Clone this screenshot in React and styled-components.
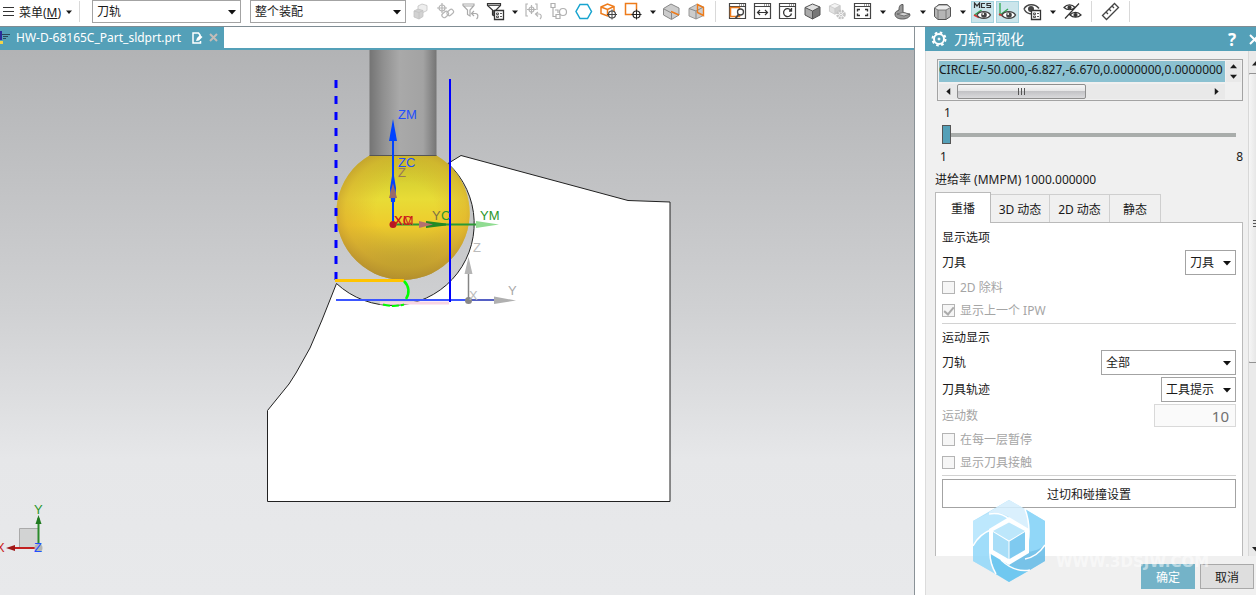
import React, { useState } from 'react';
import styled, { createGlobalStyle } from 'styled-components';

const GlobalStyles = createGlobalStyle`
  :root {
    --teal: #54a0b8;
    --panel: #f0f0f0;
    --border: #a3a3a3;
    --muted: #a5a5a5;
  }
  * {
    box-sizing: border-box;
  }
  html, body, #root {
    height: 100%;
    margin: 0;
  }
  body, button, input, select {
    font-family: "Noto Sans", "Noto Sans CJK SC", sans-serif;
    font-size: 12px;
    color: #1a1a1a;
  }
  body {
    line-height: 18px;
    overflow: hidden;
  }
`;

const AppStyles = styled.div`
  display: flex;
  flex-direction: column;
  height: 100vh;
  background: #fff;
`;

const ToolbarStyles = styled.header`
  display: flex;
  align-items: center;
  flex: none;
  height: 27px;
  padding-bottom: 3px;
  border-bottom: 1px solid #7f8c93;
  white-space: nowrap;
  overflow: hidden;
`;

const MenuButton = styled.button`
  display: flex;
  align-items: center;
  flex: none;
  gap: 5px;
  width: 73px;
  padding: 0 0 0 3px;
  border: 0;
  background: none;
`;

const Separator = styled.i`
  flex: none;
  width: 1px;
  height: 21px;
  margin: 0 ${(p) => (p.$wide ? 12 : 6)}px 0 6px;
  background: #d9d9d9;
`;

const IconGroup = styled.div`
  display: flex;
  align-items: center;
  flex: none;
  padding-left: ${(p) => p.$start || 0}px;
`;

const IconButton = styled.button`
  display: grid;
  place-items: center;
  flex: none;
  width: 23px;
  height: 22px;
  margin: 0 1px;
  padding: 0;
  border: 1px solid ${(p) => (p.$on ? '#a5d3df' : 'transparent')};
  background: ${(p) => (p.$on ? '#cbe5eb' : 'none')};
`;

const CaretButton = styled.button`
  display: grid;
  place-items: center;
  width: ${(p) => (p.$tight ? 13 : 15)}px;
  height: 22px;
  padding: 0;
  border: 0;
  background: none;
`;

const SelectStyles = styled.div`
  position: relative;
  flex: none;
  width: ${(p) => p.$width}px;
  margin-right: ${(p) => p.$gap || 0}px;
  select {
    display: block;
    width: 100%;
    height: ${(p) => p.$height || 25}px;
    padding: 0 16px 0 4px;
    border: 1px solid var(--border);
    border-radius: 0;
    background: #fff;
    appearance: none;
  }
  svg {
    position: absolute;
    top: 50%;
    right: 5px;
    margin-top: -2px;
    pointer-events: none;
  }
`;

const MainStyles = styled.main`
  display: flex;
  flex: 1;
  min-height: 0;
`;

const ViewStyles = styled.section`
  display: flex;
  flex-direction: column;
  flex: 1;
  min-width: 0;
  border-right: 1px solid #8a9297;
`;

const TabBar = styled.div`
  flex: none;
  height: 23px;
  border-bottom: 2px solid var(--teal);
`;

const FileTab = styled.div`
  display: flex;
  align-items: center;
  gap: 6px;
  width: 224px;
  height: 21px;
  background: var(--teal);
  color: #fff;
  white-space: nowrap;
  .name {
    width: 170px;
  }
  button {
    display: grid;
    padding: 0;
    border: 0;
    background: none;
  }
`;

const Viewport = styled.div`
  position: relative;
  flex: 1;
  min-height: 0;
  background: linear-gradient(#b2b3b5, #d0d1d3 48%, #e6e7e9 75%, #e8e9eb);
  .scene {
    display: block;
    width: 100%;
    height: 100%;
  }
  .triad {
    position: absolute;
    left: 0;
    bottom: 35px;
  }
  text {
    font-family: "Liberation Sans", Arial, sans-serif;
    font-size: 13px;
  }
`;

const PanelStyles = styled.aside`
  position: relative;
  display: flex;
  flex-direction: column;
  flex: none;
  width: 331px;
  margin-left: 10px;
  background: var(--panel);
  overflow: hidden;
`;

const PanelHeader = styled.div`
  display: flex;
  align-items: center;
  flex: none;
  height: 24px;
  padding-left: 6px;
  background: var(--teal);
  h2 {
    flex: 1;
    margin: 0 0 0 7px;
    color: #fff;
    font-size: 14px;
    font-weight: 400;
  }
  button {
    display: grid;
    place-items: center;
    width: 34px;
    height: 24px;
    padding: 0;
    border: 0;
    background: none;
    color: #fff;
    font-size: 17px;
    font-weight: 700;
  }
  button:last-child {
    justify-items: start;
    width: 7px;
  }
`;

const PanelBody = styled.div`
  display: flex;
  flex: 1;
  min-height: 0;
  border-left: 1px solid #dcdcdc;
`;

const PanelScroll = styled.div`
  display: flex;
  flex-direction: column;
  flex: 1;
  min-width: 0;
  margin-right: 5px;
  padding: 8px 0 0 9px;
`;

const SideBar = styled.div`
  flex: none;
  width: 8px;
  background: #eaeaea;
  border-left: 1px solid #d8d8d8;
  overflow: hidden;
  display: flex;
  flex-direction: column;
  .thumb {
    width: 14px;
    height: 290px;
    margin: 3px 0 auto -1px;
    padding: 136px 0 0 1px;
    border: 1px solid #929292;
    border-radius: 2px;
    background: linear-gradient(90deg, #f6f6f6, #dcdcdc);
  }
  svg {
    display: block;
    flex: none;
    margin: 10px 0 4px 3px;
  }
`;

const PathList = styled.div`
  display: grid;
  grid-template-columns: 1fr 16px;
  flex: none;
  width: 306px;
  height: 42px;
  margin-left: 2px;
  padding: 1px;
  border: 1px solid var(--border);
  [role='listbox'] {
    height: 21px;
    overflow: hidden;
    background: #8bc1d1;
    line-height: 17px;
    white-space: nowrap;
  }
  button {
    display: grid;
    place-items: center;
    padding: 0;
    border: 0;
    background: none;
  }
`;

const Spinner = styled.div`
  display: grid;
  grid-template-rows: 1fr 1fr;
  width: 15px;
  height: 21px;
  margin-left: 1px;
  background: #e9e9e9;
`;

const HScroll = styled.div`
  display: grid;
  grid-template-columns: 18px 129px 1fr 18px;
  height: 15px;
  margin-top: 1px;
  background: #e9e9e9;
  .thumb {
    display: grid;
    place-items: center;
    border: 1px solid #8e8e8e;
    border-radius: 2px;
    background: linear-gradient(#f5f5f5, #e4e4e5 50%, #c3c3c6 50%, #dadadc);
  }
`;

const SliderStyles = styled.div`
  margin-top: 3px;
  padding: 0 7px;
  label {
    display: block;
    height: 21px;
    padding-left: 2px;
  }
  input {
    display: block;
    width: 100%;
    height: 19px;
    margin: 0;
    background: linear-gradient(#a9adab, #a9adab) center / 100% 4px no-repeat;
    appearance: none;
  }
  input::-webkit-slider-thumb {
    width: 9px;
    height: 19px;
    border: 1px solid #555;
    background: var(--teal);
    appearance: none;
  }
  .range {
    display: flex;
    justify-content: space-between;
    margin: 4px -7px 0 -2px;
  }
`;

const FeedRate = styled.p`
  margin: 5px 0 2px;
`;

const TabsStyles = styled.div`
  display: flex;
  align-items: flex-end;
  height: 31px;
`;

const TabButton = styled.button`
  position: relative;
  flex: none;
  width: ${(p) => p.$width}px;
  height: ${(p) => (p.$active ? 31 : 28)}px;
  margin-bottom: ${(p) => (p.$active ? -1 : 0)}px;
  padding: 0;
  border: 1px solid #cfcfcf;
  border-bottom: 0;
  border-left-width: ${(p) => (p.$active ? 1 : 0)}px;
  border-color: ${(p) => (p.$active ? '#bababa' : '#cfcfcf')};
  background: ${(p) => (p.$active ? '#fff' : 'var(--panel)')};
`;

const TabPanel = styled.div`
  flex: 1;
  padding: 2px 6px 0;
  border: 1px solid #bababa;
  border-bottom: 0;
  background: #fff;
  h3 {
    margin: 0;
    padding-top: 2px;
    font-size: 12px;
    font-weight: 400;
    line-height: 22px;
  }
  hr {
    height: 1px;
    margin: 1px 0;
    border: 0;
    background: #d2d2d2;
  }
`;

const Row = styled.div`
  display: flex;
  align-items: center;
  justify-content: space-between;
  height: ${(p) => (p.$muted ? 25 : 27)}px;
  color: ${(p) => (p.$muted ? 'var(--muted)' : 'inherit')};
`;

const NumberInput = styled.input`
  width: 82px;
  height: 23px;
  padding: 0 6px;
  border: 1px solid #d9d9d9;
  background: #fafafa;
  color: #707070;
  font-size: 15px;
  text-align: right;
`;

const CheckLabel = styled.label`
  display: flex;
  align-items: center;
  gap: 5px;
  height: 23px;
  color: var(--muted);
  input {
    display: grid;
    place-items: center;
    width: 13px;
    height: 13px;
    margin: 0;
    border: 1px solid #b4b4b4;
    background: #f6f6f6;
    appearance: none;
  }
  input:checked::before {
    content: '';
    width: 4px;
    height: 8px;
    margin-top: -2px;
    border: solid #ababab;
    border-width: 0 2px 2px 0;
    transform: rotate(40deg);
  }
`;

const WideButton = styled.button`
  display: block;
  width: 100%;
  height: 29px;
  margin-top: 3px;
  border: 1px solid var(--border);
  background: #fff;
`;

const PanelFooter = styled.footer`
  display: flex;
  flex: none;
  justify-content: flex-end;
  gap: 5px;
  height: 39px;
  padding: 8px 2px 0 0;
  border-left: 1px solid #dcdcdc;
`;

const FooterButton = styled.button`
  width: 54px;
  height: 25px;
  padding: 0;
  border: 1px solid ${(p) => (p.$primary ? '#74b3c8' : '#a9a9a9')};
  background: ${(p) => (p.$primary ? '#74b3c8' : '#dedede')};
  color: ${(p) => (p.$primary ? '#fff' : '#1a1a1a')};
`;

const Watermark = styled.div`
  position: absolute;
  left: 48px;
  bottom: 13px;
  display: flex;
  align-items: flex-end;
  gap: 11px;
  pointer-events: none;
  color: rgba(255, 255, 255, 0.5);
  font: bold 15px/40px "DejaVu Sans", sans-serif;
`;

function Caret({ dir = 'down', size = 7 }) {
  const turn = { down: 0, left: 90, up: 180, right: 270 }[dir];
  return (
    <svg width={size} height={size} viewBox="0 0 8 8">
      <path d="M0 2h8L4 6.5z" fill="#1a1a1a" transform={`rotate(${turn} 4 4)`} />
    </svg>
  );
}

function Select({ label, options, ...rest }) {
  const { id, ...box } = rest;
  return (
    <SelectStyles {...box}>
      <select id={id} aria-label={label}>
        {options.map((o) => (
          <option key={o}>{o}</option>
        ))}
      </select>
      <svg width="8" height="5" viewBox="0 0 8 5">
        <path d="M0 0h8L4 4.5z" fill="#111" />
      </svg>
    </SelectStyles>
  );
}

const cube = (
  <>
    <path d="M2 5.5 9.5 2 17 5 9.5 9z" fill="#e0e0e0" />
    <path d="M2 5.5 9.5 9v8L2 13z" fill="#aaa" />
    <path d="M9.5 9 17 5v8l-7.5 4z" fill="#777" />
    <path d="M2 5.5 9.5 2 17 5v8l-7.5 4L2 13zM2 5.5 9.5 9 17 5M9.5 9v8" stroke="#555" />
  </>
);

const eye = (
  <>
    <path d="M4 13c2.500-4.500 11-4.500 13.500 0-2.500 4.500-11 4.500-13.500 0z" stroke="#444" fill="#fff" strokeWidth="1.400" />
    <circle cx="11" cy="13" r="2.800" fill="#444" />
    <circle cx="10.200" cy="12" r=".9" fill="#fff" />
  </>
);

const frame = <path d="M1.500 1.500h16v15h-16zM1.500 4.500h16M11 3h1M13 3h1M15 3h1" stroke="#444" strokeWidth="1.200" />;

const listBox = (
  <>
    <path d="M8.500 8.500h9v9h-9z" fill="#fff" stroke="#333" strokeWidth="1.300" />
    <path d="M10.500 11h2v1.500h-2zM10.500 14h2v1.500h-2zM14 11.500h2M14 14.500h2" stroke="#333" strokeWidth=".8" />
  </>
);

const icons = {
  solids: (
    <g stroke="#c2c2c2" strokeWidth=".8">
      <path d="m7 4 4-2 5 1.500v5l-4 2-5-1.500z" fill="#eee" />
      <path d="m3 9 4-2 5 1.500v6l-4 2.500-5-2z" fill="#d2d2d2" />
      <path d="M3 9l5 1.500L12 8.500M8 10.500V17" />
    </g>
  ),
  linked: (
    <g stroke="#b5b5b5" strokeWidth="1.200">
      <circle cx="6" cy="6" r="3" />
      <path d="M6 1v10M1 6h10" />
      <rect x="6" y="10.500" width="7" height="4.500" rx="2" transform="rotate(-40 9 13)" />
      <rect x="11" y="8.500" width="7" height="4.500" rx="2" transform="rotate(-40 14 11)" />
    </g>
  ),
  filterUndo: (
    <g stroke="#aaa" strokeWidth="1.200">
      <path d="M2 2h11v1.500L9 8v6l-2.500-1.500V8L2 3.500zM2 4h11" />
      <path d="m13 9-2.500 2.500L13 14M11 11.500h3.500c3 0 3 4 1 5.500" />
    </g>
  ),
  filterList: (
    <>
      <path d="M1.500 1.500h13v2L10 8v7l-3.500-2V8l-5-4.500z" stroke="#333" fill="#fff" strokeWidth="1.200" />
      <path d="M2 2.500h12v1.500H2zM7 8h2v5H7z" fill="#555" />
      {listBox}
    </>
  ),
  bracket: (
    <g stroke="#b5b5b5" strokeWidth="1.200">
      <path d="M4 2H2v12h2M11 2h2v6" />
      <circle cx="7.500" cy="7.500" r="2.500" />
      <path d="M7.500 3v9M3 7.500h9M14 10l-2.500 2L14 14.500M12 12h3c2.500 0 3 3 1 5" />
    </g>
  ),
  tree: (
    <g stroke="#b0b0b0" strokeWidth="1.200">
      <path d="M2 1.500h4v4H2zM4 5.500v9h3M6 8h3v3M7 12.500h4v4H7z" />
      <circle cx="14" cy="10" r="3.500" />
    </g>
  ),
  hexagon: <path d="M6 2.500h7.500l4 7-4 7H6l-4-7z" stroke="#18a4cf" strokeWidth="1.500" />,
  orangeCube: (
    <>
      <path d="m2 5 6.500-3 6.500 2.500v7L8.500 14 2 11.500zM2 5l6.500 2.500L15 4.500M8.500 7.500V14" stroke="#ee7b1a" strokeWidth="1.500" />
      <circle cx="13" cy="12.500" r="3.500" fill="#fff" stroke="#444" strokeWidth="1.200" />
      <path d="M13 7.500v10M8 12.500h10" stroke="#444" />
    </>
  ),
  orangeSquare: (
    <>
      <path d="M1.500 1.500h11v11h-11z" stroke="#ee7b1a" strokeWidth="1.500" />
      <circle cx="12.500" cy="12.500" r="3.500" fill="#fff" stroke="#222" strokeWidth="1.200" />
      <path d="M12.500 7.500v10M7.500 12.500h10" stroke="#222" />
    </>
  ),
  cubeEdge: (
    <>
      <path d="M1.500 6.500 9 2l8 4v7l-7.500 4.500-8-4.500z" fill="#ccc" stroke="#888" />
      <path d="m2 7 7.500 4V17" stroke="#888" />
      <path d="m9 9.500 8 3.500" stroke="#ee7b1a" strokeWidth="1.500" />
    </>
  ),
  cubeFace: (
    <>
      <path d="M2 6.500 9.500 2.500l7 2.500v8.500L9 17l-7-3z" fill="#ccc" stroke="#999" />
      <path d="M2 6.500 9 9v8M9 9l7.500-4" stroke="#888" />
      <path d="m10.500 2.500 6 3v8l-6-3z" stroke="#ee7b1a" strokeWidth="1.400" />
    </>
  ),
  windowZoom: (
    <>
      {frame}
      <path d="M2.500 5.500h9v9h-9z" stroke="#ee7b1a" strokeWidth="1.500" />
      <circle cx="12.500" cy="10" r="3" fill="#fff" stroke="#444" strokeWidth="1.300" />
      <path d="m10.500 12.500-3 4" stroke="#444" strokeWidth="1.800" />
    </>
  ),
  windowFit: (
    <>
      {frame}
      <path d="M4.500 10.500h10M7 8l-2.500 2.500L7 13M12 8l2.500 2.500L12 13" stroke="#333" strokeWidth="1.200" />
    </>
  ),
  windowRotate: (
    <>
      {frame}
      <path d="M13 8.500a4 4 0 1 0 .5 3M13.500 6v3H11" stroke="#333" strokeWidth="1.300" />
    </>
  ),
  cube,
  cubeGear: (
    <g opacity=".35">
      <g transform="scale(.72)">{cube}</g>
      <circle cx="13" cy="12.500" r="3.500" fill="#fff" stroke="#555" strokeWidth="2.500" strokeDasharray="2 .8" />
      <circle cx="13" cy="12.500" r="1.300" stroke="#555" />
    </g>
  ),
  windowFull: (
    <>
      {frame}
      <path d="M4.500 9.500v-2h2.500M12 7.500h2.500v2M14.500 11.500v2H12M7 13.500H4.500v-2" stroke="#333" strokeWidth="1.400" />
    </>
  ),
  section: (
    <>
      <path d="M2 12c0-3 3-3 4-4 0-4 1-5.500 4-5.500v8l7 2c0 3-4 4.500-7.500 4.500S2 16 2 12z" fill="#999" stroke="#555" />
      <path d="m10 10.500 7 1.500-6 2-7-2z" fill="#d5d5d5" stroke="#555" strokeWidth=".7" />
    </>
  ),
  prism: (
    <>
      <path d="M1.500 6 6 2.500h8l3.500 3v9l-4.500 3H5l-3.500-3z" fill="#b5b5b5" stroke="#555" />
      <path d="m1.500 6 4.500-3h8l3.500 2.500-4.500 2.500H5z" fill="#eee" stroke="#666" strokeWidth=".8" />
      <path d="M5 8v9M13 8v9" stroke="#777" />
    </>
  ),
  mcsEye: (
    <>
      <path d="M1.500 6V1l2.500 3 2.500-3v5M12 1.500H8.500v4H12M18 1.500h-4v2h3.500v2h-4" stroke="#333" strokeWidth="1.200" />
      <path d="m1.500 13 7-5" stroke="#2fa84f" strokeWidth="1.500" />
      <path d="m1 13 5 2.500" stroke="#d33" strokeWidth="1.800" />
      {eye}
    </>
  ),
  wcsEye: (
    <>
      <path d="M2 1v12l8-6" stroke="#2fa84f" strokeWidth="1.300" />
      <path d="m1 12 5 2.500" stroke="#d33" strokeWidth="1.800" />
      {eye}
    </>
  ),
  eyeList: (
    <>
      <path d="M1 7C4 1.500 12 1.500 16 6.500M1 7c2 4 5 5 8 5" stroke="#444" strokeWidth="1.500" />
      <circle cx="8" cy="7" r="3" fill="#444" />
      {listBox}
    </>
  ),
  eyeSwap: (
    <g stroke="#333" strokeWidth="1.200">
      <path d="M1 5.500c3-3.500 8-3.500 11 0-3 3-8 3-11 0zM7 13c3-3.500 8-3.500 11 0-3 3-8 3-11 0zM16 1.500 2 16.500" />
      <circle cx="6.500" cy="5.500" r="1.500" fill="#333" />
      <circle cx="12.500" cy="13" r="1.500" fill="#333" />
    </g>
  ),
  ruler: <path d="M1.500 13.500 13.500 1.500l4 4L5.500 17.500zM5 10l2 2M8 7l2 2M11 4l2 2" stroke="#444" strokeWidth="1.300" />,
};

function Tool({ icon, label, on }) {
  return (
    <IconButton $on={on} aria-label={label || icon}>
      <svg width="19" height="19" viewBox="0 0 19 19" fill="none">
        {icons[icon]}
      </svg>
    </IconButton>
  );
}

function DropTool({ tight, ...rest }) {
  return (
    <>
      <Tool {...rest} />
      <CaretButton $tight={tight} aria-label="more">
        <Caret size={6} />
      </CaretButton>
    </>
  );
}

function Toolbar() {
  return (
    <ToolbarStyles>
      <MenuButton>
        <svg width="11" height="10" viewBox="0 0 11 10">
          <path d="M0 .5h11M0 4.500h11M0 8.500h11" stroke="#333" />
        </svg>
        <span>
          菜单(<u>M</u>)
        </span>
        <Caret size={6} />
      </MenuButton>
      <Separator $wide />
      <Select label="类型过滤器" options={['刀轨']} $width={149} $height={23} $gap={9} />
      <Select label="选择范围" options={['整个装配']} $width={156} $height={23} />
      <IconGroup $start={2}>
        <Tool icon="solids" />
        <Tool icon="linked" />
        <Tool icon="filterUndo" />
        <DropTool icon="filterList" tight />
        <Tool icon="bracket" />
        <Tool icon="tree" />
        <Tool icon="hexagon" />
        <Tool icon="orangeCube" />
        <DropTool icon="orangeSquare" tight />
        <Tool icon="cubeEdge" />
        <Tool icon="cubeFace" />
      </IconGroup>
      <Separator />
      <IconGroup $start={3}>
        <Tool icon="windowZoom" />
        <Tool icon="windowFit" />
        <Tool icon="windowRotate" />
        <Tool icon="cube" />
        <Tool icon="cubeGear" />
        <DropTool icon="windowFull" />
        <DropTool icon="section" />
        <DropTool icon="prism" />
        <Tool icon="mcsEye" on />
        <Tool icon="wcsEye" on />
        <DropTool icon="eyeList" />
        <Tool icon="eyeSwap" />
      </IconGroup>
      <Separator />
      <Tool icon="ruler" />
      <Separator />
    </ToolbarStyles>
  );
}

function Scene() {
  return (
    <svg className="scene" viewBox="0 50 914 545" fill="none">
      <defs>
        <linearGradient id="shank">
          <stop offset="0" stopColor="#747474" />
          <stop offset=".2" stopColor="#8f8f8f" />
          <stop offset=".45" stopColor="#a9a9a9" />
          <stop offset=".8" stopColor="#a3a3a3" />
          <stop offset="1" stopColor="#757575" />
        </linearGradient>
        <radialGradient id="ballEdge" cx=".52" cy=".45" r=".56">
          <stop offset=".4" stopColor="#d9a52e" stopOpacity="0" />
          <stop offset=".8" stopColor="#d9a52e" stopOpacity=".45" />
          <stop offset="1" stopColor="#b98c2e" stopOpacity=".75" />
        </radialGradient>
        <linearGradient id="ball" x2="0" y2="1">
          <stop offset="0" stopColor="#c2c22c" />
          <stop offset=".35" stopColor="#e8dc36" />
          <stop offset=".56" stopColor="#eecb2c" />
          <stop offset=".8" stopColor="#c2a832" />
          <stop offset="1" stopColor="#9c902c" />
        </linearGradient>
      </defs>
      <path d="M369.500 50h67v105.500h-67z" fill="url(#shank)" />
      <path
        d="M461 155.500 628 200.500l42 1.500v299.500H267.500v-91L289 384l7-11 14-25 12-28 14.500-36.500A81.500 81.500 0 1 0 448 163.500z"
        fill="#fff"
        stroke="#222"
      />
      <path d="M369.500 155.500h67A66.700 66.700 0 1 1 369.500 155.500z" fill="url(#ball)" />
      <path d="M369.500 155.500h67A66.700 66.700 0 1 1 369.500 155.500z" fill="url(#ballEdge)" />
      <path d="M369.500 155.500h67" stroke="#555" />

      <path d="M336 80v200" stroke="#00f" strokeWidth="3" strokeDasharray="8 8" />
      <path d="M380 303h69" stroke="#f8d5e4" strokeWidth="3" />
      <path d="M336 300h132" stroke="#3b55ff" strokeWidth="2" />
      <path d="M468 300h28" stroke="#5560c4" strokeWidth="2" />
      <path d="M335 280.500h69" stroke="#ffc400" strokeWidth="3" />
      <path d="M404 281c5 5 6 12 2 18" stroke="#0f0" strokeWidth="2.500" />
      <path d="M383 304.500c7 2 14 2 21 0" stroke="#0f0" strokeWidth="2" strokeDasharray="7 2" />

      <path d="M393 224V140" stroke="#0043ff" strokeWidth="2" />
      <path d="m393 119 4 22h-8z" fill="#0043ff" />
      <path d="m393 170 3 18-1 14h-4l-1-14z" fill="#0043ff" />
      <path d="m393 183 4 15h-8z" fill="#9b6a68" />
      <path d="M393 224.500h84" stroke="#2a9a35" strokeWidth="2" />
      <path d="m476 221 23 3.500-23 3.500z" fill="#90dc92" />
      <path d="m426 221 20 2.500v2l-20 2.500z" fill="#228a26" />
      <path d="m419 221 14 3.500-14 3.500z" fill="#b57070" />
      <circle cx="393" cy="224.500" r="3.500" fill="#b91822" />
      <path d="M468.500 300v-30" stroke="#858585" strokeWidth="1.500" />
      <path d="m468.500 257 4 17h-8z" fill="#b5b5b5" />
      <path d="m494 296.500 22 4-22 3.500z" fill="#b0b0b0" />
      <circle cx="468.500" cy="300.500" r="3.500" fill="#888" />
      <path d="M450 79v223" stroke="#00f" strokeWidth="2" />

      <text x="398" y="119" fill="#1f4fff">ZM</text>
      <text x="398" y="167" fill="#1f4fff">ZC</text>
      <text x="398" y="177" fill="#96785a">Z</text>
      <text x="394" y="225" fill="#cc1c1c">XM</text>
      <text x="394" y="225" fill="#cc1c1c">XC</text>
      <text x="432" y="220" fill="#7d7044">Y</text>
      <text x="441" y="220" fill="#2c962c">C</text>
      <text x="480" y="220" fill="#2c962c">YM</text>
      <text x="473" y="252" fill="#bbb">Z</text>
      <text x="469" y="300" fill="#bbb">X</text>
      <text x="508" y="295" fill="#aaa">Y</text>
    </svg>
  );
}

function Triad() {
  return (
    <svg className="triad" width="60" height="60" viewBox="0 500 60 60">
      <path d="M19.500 528.500h19v19h-19z" fill="#d2d3d3" stroke="#aaa" />
      <path d="M38.500 548v-30" stroke="#2a8a2a" strokeWidth="2" />
      <path d="m38.500 515 3 9h-6z" fill="#1f7a1f" />
      <path d="M38 548H12" stroke="#c22020" strokeWidth="2" />
      <path d="m6 548 9-3v6z" fill="#a01818" />
      <circle cx="38.500" cy="548" r="4" fill="#b5b5b5" />
      <text x="34" y="514" fill="#2c962c">Y</text>
      <text x="-4" y="552" fill="#cc1c1c">X</text>
      <text x="34" y="552" fill="#1f4fff">Z</text>
    </svg>
  );
}

function ModelView() {
  return (
    <ViewStyles>
      <TabBar>
        <FileTab>
          <svg width="10" height="15" viewBox="0 0 10 15">
            <path d="M0 1h2v9H0z" fill="#2a2a9a" />
            <path d="M2 4.500h8M3 6.500h5M3 8.500h3" stroke="#2b4a5a" />
            <path d="M0 11h3v3H0z" fill="#f3d44a" />
          </svg>
          <span className="name">HW-D-68165C_Part_sldprt.prt</span>
          <svg width="11" height="12" viewBox="0 0 11 12" fill="none">
            <path d="M8 4V3L6.500 1H1v10h7.500V9" stroke="#fff" strokeWidth="1.500" />
            <path d="m4 9 1-3 3-3 2.500 2L7 8.500z" fill="#fff" />
          </svg>
          <button aria-label="关闭">
            <svg width="9" height="9" viewBox="0 0 9 9">
              <path d="m1 1 7 7M8 1 1 8" stroke="#c3bcb8" strokeWidth="2" />
            </svg>
          </button>
        </FileTab>
      </TabBar>
      <Viewport>
        <Scene />
        <Triad />
      </Viewport>
    </ViewStyles>
  );
}

function Logo() {
  return (
    <svg width="72" height="82" viewBox="0 0 72 82">
      <g opacity=".88">
        <path d="M36 0 72 21v40L36 82 0 61V21z" fill="#a4defa" />
        <path d="M36 0 52 9q6 16 3 34L36 17 16 14V12z" fill="#d5effd" />
        <path d="M52 9 72 21v24q-8 12-20 14l4-15q2-20-4-35z" fill="#82d2f8" />
        <path d="M72 45v16L57 70Q42 73 28 60l24-8q12 0 20-7z" fill="#67bce8" />
        <path d="M57 70 36 82 23 74Q16 62 17 50l19 14q12 7 21 6z" fill="#5fc3f0" />
        <path d="M23 74 0 61V46q6-12 20-17l-3 20q1 16 6 25z" fill="#93d9fa" />
        <path d="M0 46V21l16-8q12-1 20 4L20 29Q6 34 0 46z" fill="#b5e5fd" />
        <path d="M16 14q12-2 20 5M52 9q6 16 3 34M72 45q-8 12-20 14M57 70Q42 73 28 60M23 74Q16 62 17 50M0 46q6-12 20-17" fill="none" stroke="#fff" strokeWidth="1.500" />
      </g>
      <path d="m36 17 20 12v24L36 65 16 53V29z" fill="#fff" />
      <path d="m36 22.500 16 8.500-16 9.500L20 31z" fill="#bde7fb" />
      <path d="m20 32 15.500 9.500V59L20 50z" fill="#a8def8" />
      <path d="m52 32-15.500 9.500V59L52 50z" fill="#7fcaf0" />
    </svg>
  );
}

const tabs = [
  { title: '重播', width: 56 },
  { title: '3D 动态', width: 59 },
  { title: '2D 动态', width: 60 },
  { title: '静态', width: 51 },
];

function ToolpathPanel() {
  const [tab, setTab] = useState('重播');
  const [step, setStep] = useState(1);

  return (
    <PanelStyles>
      <PanelHeader>
        <svg width="16" height="16" viewBox="0 0 16 16" fill="none" stroke="#fff">
          <circle cx="8" cy="8" r="5" strokeWidth="2" />
          <circle cx="8" cy="8" r="6.500" strokeWidth="2" strokeDasharray="2.600 2.500" />
          <circle cx="8" cy="8" r="1" fill="#fff" />
        </svg>
        <h2>刀轨可视化</h2>
        <button aria-label="帮助">?</button>
        <button aria-label="关闭">
          <svg width="11" height="11" viewBox="0 0 11 11">
            <path d="m1 1 9 9M10 1l-9 9" stroke="#fff" strokeWidth="2" />
          </svg>
        </button>
      </PanelHeader>
      <PanelBody>
        <PanelScroll>
          <PathList>
            <div role="listbox" aria-label="刀轨列表">
              <div role="option" aria-selected="true">
                CIRCLE/-50.000,-6.827,-6.670,0.0000000,0.0000000
              </div>
            </div>
            <Spinner>
              <button aria-label="上"><Caret dir="up" /></button>
              <button aria-label="下"><Caret /></button>
            </Spinner>
            <HScroll>
              <button aria-label="左"><Caret dir="left" /></button>
              <span className="thumb">
                <svg width="8" height="7" viewBox="0 0 8 7">
                  <path d="M.5 0v7M3.500 0v7M6.500 0v7" stroke="#555" />
                </svg>
              </span>
              <span />
              <button aria-label="右"><Caret dir="right" /></button>
            </HScroll>
          </PathList>
          <SliderStyles>
            <label htmlFor="step">{step}</label>
            <input
              id="step"
              type="range"
              min="1"
              max="8"
              value={step}
              onChange={(e) => setStep(e.target.value)}
            />
            <div className="range">
              <span>1</span>
              <span>8</span>
            </div>
          </SliderStyles>
          <FeedRate>进给率 (MMPM) 1000.000000</FeedRate>
          <TabsStyles role="tablist">
            {tabs.map((t) => (
              <TabButton
                key={t.title}
                role="tab"
                aria-selected={tab === t.title}
                $active={tab === t.title}
                $width={t.width}
                onClick={() => setTab(t.title)}
              >
                {t.title}
              </TabButton>
            ))}
          </TabsStyles>
          <TabPanel>
            <h3>显示选项</h3>
            <Row>
              <label htmlFor="tool">刀具</label>
              <Select id="tool" options={['刀具']} $width={51} />
            </Row>
            <CheckLabel>
              <input type="checkbox" disabled />
              2D 除料
            </CheckLabel>
            <CheckLabel>
              <input type="checkbox" disabled defaultChecked />
              显示上一个 IPW
            </CheckLabel>
            <hr />
            <h3>运动显示</h3>
            <Row>
              <label htmlFor="path">刀轨</label>
              <Select id="path" options={['全部']} $width={135} />
            </Row>
            <Row>
              <label htmlFor="trace">刀具轨迹</label>
              <Select id="trace" options={['工具提示']} $width={75} />
            </Row>
            <Row $muted>
              <label htmlFor="count">运动数</label>
              <NumberInput id="count" defaultValue="10" disabled />
            </Row>
            <CheckLabel>
              <input type="checkbox" disabled />
              在每一层暂停
            </CheckLabel>
            <CheckLabel>
              <input type="checkbox" disabled />
              显示刀具接触
            </CheckLabel>
            <hr />
            <WideButton>过切和碰撞设置</WideButton>
          </TabPanel>
        </PanelScroll>
        <SideBar>
          <svg width="8" height="5" viewBox="0 0 8 5">
            <path d="M0 4.500h8L4 0z" fill="#222" />
          </svg>
          <div className="thumb">
            <svg width="8" height="8" viewBox="0 0 8 8">
              <path d="M0 .5h8M0 3.500h8M0 6.500h8" stroke="#555" />
            </svg>
          </div>
          <svg width="8" height="5" viewBox="0 0 8 5">
            <path d="M0 0h8L4 4.500z" fill="#222" />
          </svg>
        </SideBar>
      </PanelBody>
      <PanelFooter>
        <FooterButton $primary>确定</FooterButton>
        <FooterButton>取消</FooterButton>
      </PanelFooter>
      <Watermark>
        <Logo />
        <span>WWW.3DSJW.COM</span>
      </Watermark>
    </PanelStyles>
  );
}

export default function App() {
  return (
    <AppStyles>
      <GlobalStyles />
      <Toolbar />
      <MainStyles>
        <ModelView />
        <ToolpathPanel />
      </MainStyles>
    </AppStyles>
  );
}
